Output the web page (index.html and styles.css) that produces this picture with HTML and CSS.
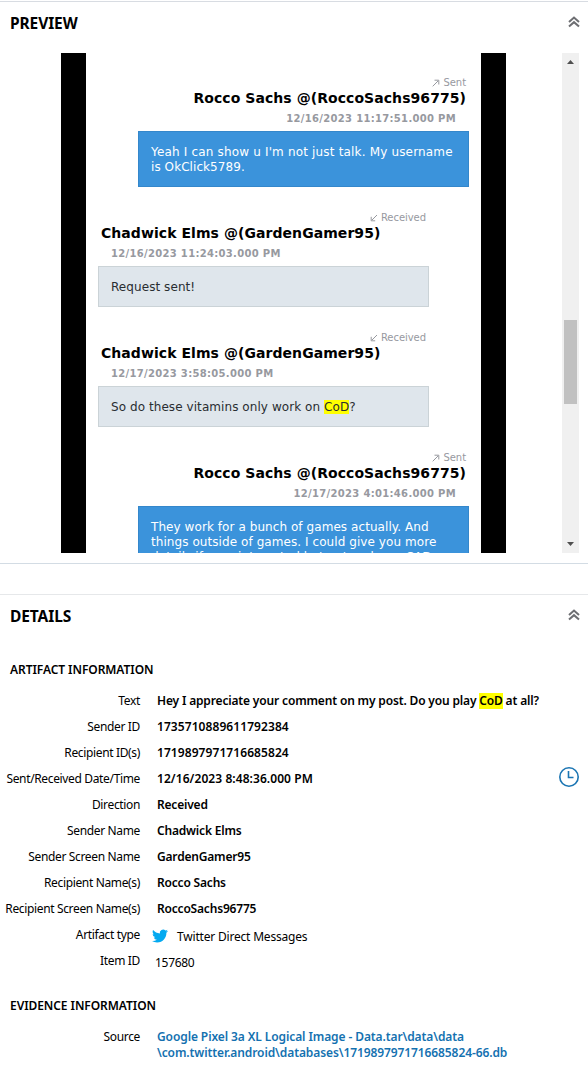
FILE: index.html
```html
<!DOCTYPE html>
<html lang="en">
<head>
<meta charset="utf-8">
<title>Artifact details</title>
<link rel="stylesheet" href="styles.css">
</head>
<body>
<section class="panel preview">
  <header class="panel-head">
    <h2>PREVIEW</h2>
    <svg class="collapse" width="12" height="12" viewBox="0 0 12 12"><path d="M1 6 6 1.6 11 6M1 10.6 6 6.2 11 10.6"/></svg>
  </header>
  <div class="viewer">
    <div class="phone">
      <article class="msg sent">
        <div class="dir"><svg width="8" height="8" viewBox="0 0 8 8"><path d="M.7 7.3 6 2M2.5 1.2H6.8V5.5"/></svg><span>Sent</span></div>
        <div class="name"><span>Rocco Sachs @(RoccoSachs96775)</span></div>
        <div class="time"><span>12/16/2023 11:17:51.000 PM</span></div>
        <p class="bubble"><span class="wide">Yeah I can show u I'm not just talk. My username</span><br>is OkClick5789.</p>
      </article>
      <article class="msg received">
        <div class="dir"><svg width="8" height="8" viewBox="0 0 8 8"><path d="M7 1 2 6M1.2 2.8V6.8H5.2"/></svg><span>Received</span></div>
        <div class="name"><span>Chadwick Elms @(GardenGamer95)</span></div>
        <div class="time"><span>12/16/2023 11:24:03.000 PM</span></div>
        <p class="bubble">Request sent!</p>
      </article>
      <article class="msg received">
        <div class="dir"><svg width="8" height="8" viewBox="0 0 8 8"><path d="M7 1 2 6M1.2 2.8V6.8H5.2"/></svg><span>Received</span></div>
        <div class="name"><span>Chadwick Elms @(GardenGamer95)</span></div>
        <div class="time"><span>12/17/2023 3:58:05.000 PM</span></div>
        <p class="bubble">So do these vitamins only work on <mark>CoD</mark>?</p>
      </article>
      <article class="msg sent">
        <div class="dir"><svg width="8" height="8" viewBox="0 0 8 8"><path d="M.7 7.3 6 2M2.5 1.2H6.8V5.5"/></svg><span>Sent</span></div>
        <div class="name"><span>Rocco Sachs @(RoccoSachs96775)</span></div>
        <div class="time"><span>12/17/2023 4:01:46.000 PM</span></div>
        <p class="bubble">They work for a bunch of games actually. And<br>things outside of games. I could give you more<br>details if your interested but not on here. CAD</p>
      </article>
    </div>
    <div class="scrollbar">
      <svg width="7" height="4" viewBox="0 0 7 4"><path d="M0 4 3.5 0 7 4Z"/></svg>
      <div class="thumb"></div>
      <svg width="7" height="4" viewBox="0 0 7 4"><path d="M0 0H7L3.5 4Z"/></svg>
    </div>
  </div>
</section>
<section class="panel details">
  <header class="panel-head">
    <h2>DETAILS</h2>
    <svg class="collapse" width="12" height="12" viewBox="0 0 12 12"><path d="M1 6 6 1.6 11 6M1 10.6 6 6.2 11 10.6"/></svg>
  </header>
  <h3>ARTIFACT INFORMATION</h3>
  <dl>
    <dt>Text</dt><dd class="message">Hey I appreciate your comment on my post. Do you play <mark>CoD</mark> at all?</dd>
    <dt>Sender ID</dt><dd class="num">1735710889611792384</dd>
    <dt>Recipient ID(s)</dt><dd class="num">1719897971716685824</dd>
    <dt>Sent/Received Date/Time</dt><dd class="num stamp"><span>12/16/2023 8:48:36.000 PM</span><svg width="22" height="22" viewBox="0 0 22 22"><circle cx="11" cy="11" r="9.2"/><path d="M10.5 5V11.5H15.5"/></svg></dd>
    <dt>Direction</dt><dd>Received</dd>
    <dt>Sender Name</dt><dd>Chadwick Elms</dd>
    <dt>Sender Screen Name</dt><dd>GardenGamer95</dd>
    <dt>Recipient Name(s)</dt><dd>Rocco Sachs</dd>
    <dt>Recipient Screen Name(s)</dt><dd>RoccoSachs96775</dd>
    <dt>Artifact type</dt><dd class="type"><svg width="16" height="16" viewBox="0 0 24 24"><path d="M23.953 4.57a10 10 0 01-2.825.775 4.958 4.958 0 002.163-2.723c-.951.555-2.005.959-3.127 1.184a4.92 4.92 0 00-8.384 4.482C7.69 8.095 4.067 6.13 1.64 3.162a4.822 4.822 0 00-.666 2.475c0 1.71.87 3.213 2.188 4.096a4.904 4.904 0 01-2.228-.616v.06a4.923 4.923 0 003.946 4.827 4.996 4.996 0 01-2.212.085 4.936 4.936 0 004.604 3.417 9.867 9.867 0 01-6.102 2.105c-.39 0-.779-.023-1.17-.067a13.995 13.995 0 007.557 2.209c9.053 0 13.998-7.496 13.998-13.985 0-.21 0-.42-.015-.63A9.935 9.935 0 0024 4.59z"/></svg><span>Twitter Direct Messages</span></dd>
    <dt>Item ID</dt><dd class="plain">157680</dd>
  </dl>
  <h3 class="evidence">EVIDENCE INFORMATION</h3>
  <dl class="last">
    <dt>Source</dt><dd class="source"><a>Google Pixel 3a XL Logical Image - Data.tar\data\data</a><a>\com.twitter.android\databases\1719897971716685824-66.db</a></dd>
  </dl>
</section>
</body>
</html>
```
FILE: styles.css
```css
* { box-sizing: border-box; }
body {
  margin: 0;
  padding-top: 1px;
  min-height: 1072px;
  background: #fff;
  color: #000;
  font-family: "Noto Sans", "Open Sans", sans-serif;
}
h2, h3, p, dl, dd { margin: 0; }
mark { background: #ff0; color: inherit; }

.panel-head {
  display: flex;
  justify-content: space-between;
  align-items: center;
  height: 44px;
  padding: 0 8px 2px 10px;
}
h2 { font-size: 15.5px; line-height: 20px; font-weight: 700; letter-spacing: -.1px; }
.collapse { fill: none; stroke: #6e6f73; stroke-width: 2; margin-top: -2px; }

.preview {
  height: 563px;
  border-top: 1px solid #d8dce2;
  border-bottom: 1px solid #d3dce4;
}
.viewer {
  display: flex;
  justify-content: space-between;
  height: 500px;
  margin: 7px 9px 0 61px;
}
.phone {
  width: 445px;
  height: 500px;
  padding: 21px 12px 0;
  overflow: hidden;
  border: solid #000;
  border-width: 0 25px;
  display: flex;
  flex-direction: column;
  gap: 22px;
  font-family: "DejaVu Sans", sans-serif;
}
.msg { width: 331px; flex: none; }
.sent { align-self: flex-end; }
.dir {
  display: flex;
  justify-content: flex-end;
  align-items: center;
  gap: 3px;
  height: 16px;
  padding: 1px 3px 0 0;
  font-size: 10px;
  letter-spacing: -.05px;
  color: #97999f;
}
.dir svg { fill: none; stroke: #97999f; stroke-width: 1; }
.name {
  height: 16px;
  line-height: 16px;
  padding: 0 3px;
  font-size: 14px;
  font-weight: bold;
  letter-spacing: .06px;
  white-space: nowrap;
}
.time {
  height: 25px;
  line-height: 25px;
  padding: 0 13px;
  font-size: 10px;
  font-weight: bold;
  letter-spacing: .31px;
  color: #97999f;
  white-space: nowrap;
}
.sent .name, .sent .time { text-align: right; }
.bubble {
  padding: 13px 12px 11px;
  border: 1px solid #cbd3d7;
  background: #dfe6ec;
  color: #292d31;
  font-size: 12px;
  line-height: 15px;
  letter-spacing: .07px;
  white-space: nowrap;
}
.wide { letter-spacing: .17px; }
.sent .bubble { background: #3b93db; border-color: #3487cb; color: #fff; }

.scrollbar {
  width: 17px;
  height: 500px;
  padding: 7px 2px;
  background: #f0f0f0;
  display: flex;
  flex-direction: column;
  justify-content: space-between;
  align-items: center;
}
.scrollbar svg { fill: #505050; }
.thumb { width: 13px; height: 84px; margin-top: 118px; background: #c1c1c1; }

.details { margin-top: 30px; border-top: 1px solid #e6e8ea; }
h3 {
  font-size: 12px;
  line-height: 16px;
  font-weight: 600;
  letter-spacing: -.07px;
  padding-left: 10px;
  margin-top: 23px;
}
dl {
  display: grid;
  grid-template-columns: 140px 1fr;
  column-gap: 17px;
  grid-auto-rows: 26px;
  margin-top: 10px;
  font-size: 12px;
  line-height: 26px;
  white-space: nowrap;
}
.last { grid-auto-rows: auto; }
dt { text-align: right; letter-spacing: -.35px; }
dd { font-weight: 600; letter-spacing: -.19px; }
dd mark { display: inline-block; line-height: 16px; height: 16px; }
.message { letter-spacing: -.16px; }
.num { letter-spacing: .07px; }
.stamp { display: flex; justify-content: space-between; align-items: center; padding-right: 8px; }
.stamp svg { fill: none; stroke: #1b75b3; stroke-width: 1.6; margin-top: -4px; }
.type { display: flex; align-items: center; gap: 9px; margin-left: -5px; padding-top: 3px; font-weight: 400; }
.type svg { fill: #04a9f0; margin-top: -2px; }
.plain { margin-left: -2px; padding-top: 2px; font-weight: 400; letter-spacing: -.3px; }
.evidence { margin-top: 24px; }
.source {
  display: flex;
  flex-direction: column;
  padding-top: 5px;
  line-height: 16px;
  letter-spacing: -.1px;
  color: #1471b0;
}
```
